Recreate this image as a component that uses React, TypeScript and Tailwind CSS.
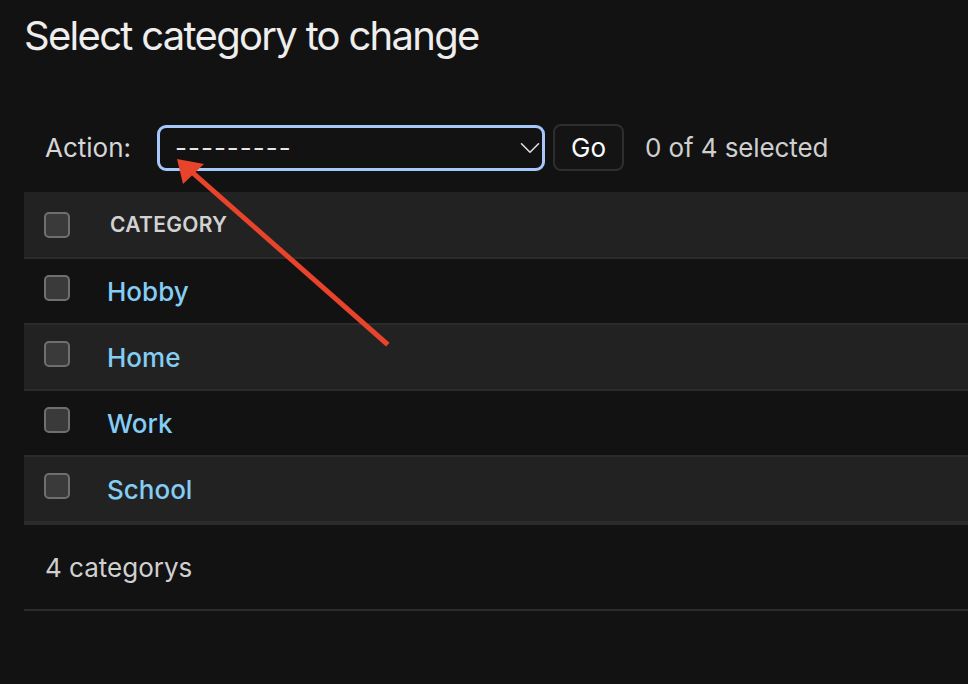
import { ChevronDown } from "lucide-react";

const rows = ["Hobby", "Home", "Work", "School"];

function Checkbox() {
  return (
    <span className="block h-[26px] w-[26px] rounded-[5px] border-2 border-[#6f6f6f] bg-[#3a3a3a]" />
  );
}

export default function App() {
  return (
    <div className="relative min-h-[684px] w-full overflow-hidden bg-[#121212] font-['Inter',sans-serif] text-[#ececec]">
      <h1 className="pl-6 pt-3 text-[40px] font-normal leading-[48px] tracking-[-1.7px] text-[#eeeeee]">
        Select category to change
      </h1>

      <div className="mt-[64px] flex items-center pl-[45px]">
        <span className="w-[112px] text-[26px] text-[#d6d6d6]">Action:</span>
        <div className="flex h-[46px] w-[388px] items-center justify-between rounded-[9px] border-[3px] border-[#a7c7fa] bg-[#121212] pl-[15px]">
          <span className="text-[26px] leading-none tracking-[1px] text-[#e6e6e6]">---------</span>
          <ChevronDown size={34} strokeWidth={1.1} className="-mr-[5px] text-[#e0e0e0]" />
        </div>
        <button className="ml-2 h-[47px] w-[71px] rounded-[8px] border-2 border-[#2e2e2e] bg-[#141414] text-[26px] text-white">
          Go
        </button>
        <span className="ml-[21px] text-[26px] tracking-[-0.1px] text-[#cfcfcf]">0 of 4 selected</span>
      </div>

      <div className="ml-6 mt-[21px]">
        <div className="flex h-[67px] items-center border-b-2 border-[#2b2b2b] bg-[#222222] pl-5">
          <Checkbox />
          <span className="ml-[40px] text-[21px] font-semibold tracking-[0.3px] text-[#d2d2d2]">
            CATEGORY
          </span>
        </div>
        {rows.map((name, i) => (
          <div
            key={name}
            className={
              "flex h-[66px] items-center pl-5 " +
              (i === rows.length - 1 ? "h-[68px] border-b-4 " : "border-b-2 ") +
              "border-[#2b2b2b] " +
              (i % 2 === 0 ? "bg-[#121212]" : "bg-[#222222]")
            }
          >
            <span className="-mt-[6px]">
              <Checkbox />
            </span>
            <a className="ml-[37px] text-[26px] font-medium text-[#84cdf5]">{name}</a>
          </div>
        ))}
        <div className="flex h-[86px] items-center border-b-2 border-[#2b2b2b] pl-[21px] text-[26px] text-[#d0d0d0]">
          4 categorys
        </div>
      </div>

      <svg
        className="pointer-events-none absolute left-0 top-0"
        width="968"
        height="684"
        viewBox="0 0 968 684"
      >
        <line x1="386" y1="343" x2="193" y2="173" stroke="#e8432b" strokeWidth="5" strokeLinecap="square" />
        <polygon points="177,159 183,184 204,164" fill="#e8432b" />
      </svg>
    </div>
  );
}
